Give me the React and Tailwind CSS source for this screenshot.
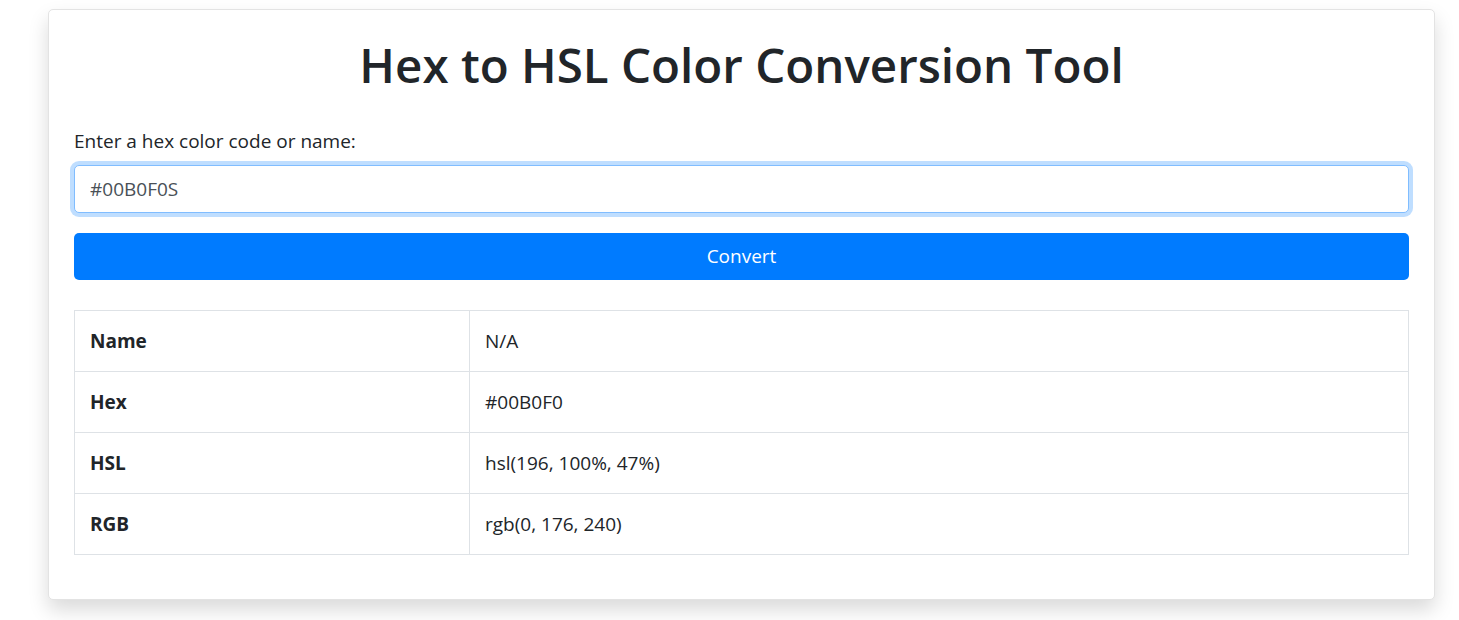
import { useState } from 'react';

const ROWS = [
  { label: 'Name', value: 'N/A' },
  { label: 'Hex', value: '#00B0F0' },
  { label: 'HSL', value: 'hsl(196, 100%, 47%)' },
  { label: 'RGB', value: 'rgb(0, 176, 240)' },
];

export default function App() {
  const [color, setColor] = useState('#00B0F0S');

  return (
    <div className="min-h-screen bg-white font-['Open_Sans',sans-serif] text-[#212529]">
      <div className="pt-[9px] pl-[48px] pr-[24px]">
        <div className="bg-white border border-[#e3e3e3] rounded-[5px] shadow-[0_10px_20px_rgba(0,0,0,0.15)] px-[25px] pt-[25px] pb-[44px]">
          <h1 className="text-center text-[47.5px] leading-[60px] font-semibold mb-[31px]">
            Hex to HSL Color Conversion Tool
          </h1>

          <label className="block text-[19px] leading-[30px] mb-[9px]">Enter a hex color code or name:</label>
          <input
            value={color}
            onChange={e => setColor(e.target.value)}
            className="block w-full h-[48px] px-[15px] text-[19px] text-[#495057] bg-white border border-[#80bdff] rounded-[5px] outline-none shadow-[0_0_0_4px_rgba(0,123,255,0.25)]"
          />

          <button className="mt-[20px] w-full h-[47px] bg-[#007bff] text-white text-[19px] rounded-[5px]">
            Convert
          </button>

          <table className="mt-[30px] w-full border-collapse text-[19px]">
            <tbody>
              {ROWS.map(r => (
                <tr key={r.label} className="h-[61px]">
                  <th className="w-[395px] border border-[#dee2e6] px-[15px] text-left font-bold">{r.label}</th>
                  <td className="border border-[#dee2e6] px-[15px]">{r.value}</td>
                </tr>
              ))}
            </tbody>
          </table>
        </div>
      </div>
    </div>
  );
}
